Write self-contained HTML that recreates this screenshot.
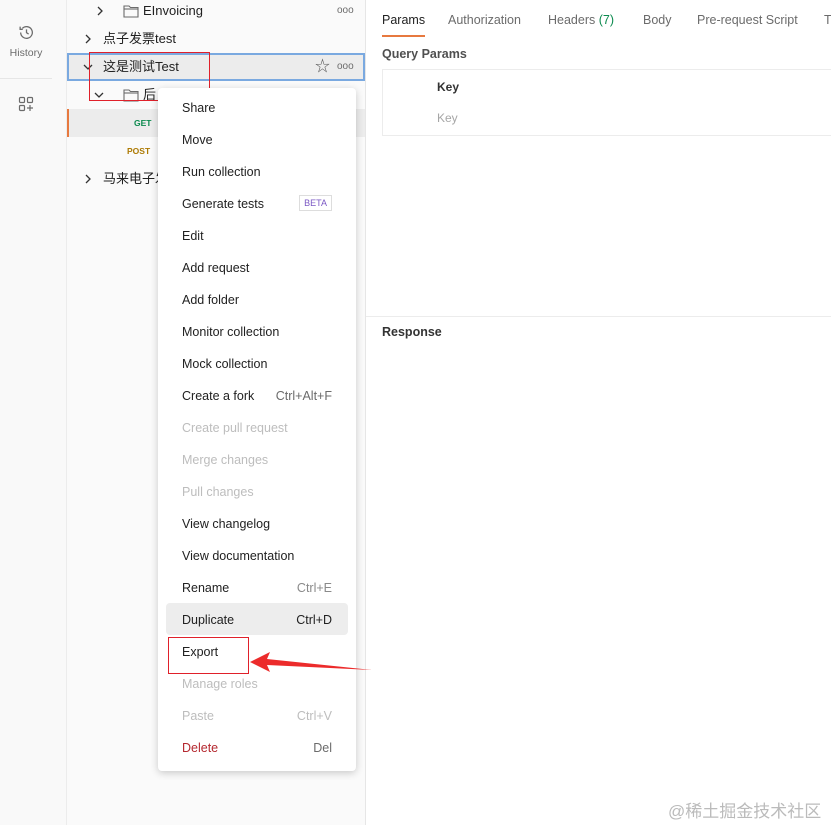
<!DOCTYPE html>
<html><head><meta charset="utf-8"><style>
*{margin:0;padding:0;box-sizing:border-box}
body{width:831px;height:825px;overflow:hidden;position:relative;background:#fff;font-family:"Liberation Sans","Noto Sans CJK SC",sans-serif;font-size:13px;color:#212121}
.abs{position:absolute}
#rail{left:0;top:0;width:67px;height:825px;background:#f9f9f9;border-right:1px solid #ececec}
#side{left:67px;top:0;width:299px;height:825px;background:#fafafa;border-right:1px solid #e6e6e6}
.row{position:absolute;left:0;width:298px;height:28px;line-height:28px}
.menu{left:158px;top:88px;width:198px;height:683px;background:#fff;border-radius:4px;box-shadow:0 2px 8px rgba(0,0,0,.2)}
.mi{position:absolute;left:24px;right:24px;height:32px;line-height:34px;font-size:12.5px;color:#212121}
.mi span{position:absolute;right:0;color:#6b6b6b}
.dis{color:#bdbdbd!important}
.dis span{color:#bdbdbd!important}
.tab{position:absolute;top:13px;font-size:12.5px;color:#6b6b6b}
.chev{position:absolute;top:9px}
</style></head><body>
<div id="rail" class="abs">
 <svg class="abs" style="left:18px;top:24px" width="17" height="17" viewBox="0 0 16 16" fill="none" stroke="#6b6b6b" stroke-width="1.2"><path d="M2.5 8a5.5 5.5 0 1 0 1.6-3.9"/><path d="M2 2.5v2.5h2.5"/><path d="M8 5v3.2l2 1.3"/></svg>
 <div class="abs" style="left:0;width:52px;top:47px;text-align:center;font-size:10.5px;color:#6b6b6b">History</div>
 <div class="abs" style="left:0;top:78px;width:52px;border-top:1px solid #e6e6e6"></div>
 <svg class="abs" style="left:18px;top:96px" width="16" height="16" viewBox="0 0 16 16" fill="none" stroke="#6b6b6b" stroke-width="1.2"><rect x="1.5" y="1.5" width="5" height="5" rx="1"/><rect x="9.5" y="1.5" width="5" height="5" rx="1"/><rect x="1.5" y="9.5" width="5" height="5" rx="1"/><path d="M12 9v6M9 12h6"/></svg>
</div>
<div id="side" class="abs">
 <div class="row" style="top:-3px"><svg class="chev" style="left:28px" width="10" height="10" viewBox="0 0 10 10" fill="none" stroke="#333" stroke-width="1.3"><path d="M3 1l4 4-4 4"/></svg>
  <svg class="abs" style="left:56px;top:7px" width="16" height="14" viewBox="0 0 16 14" fill="none" stroke="#6b6b6b" stroke-width="1.1"><path d="M1 2h5l1.5 1.5H15V13H1z"/><path d="M1 5h14"/></svg>
  <span class="abs" style="left:76px">EInvoicing</span><span class="abs" style="left:270px;color:#6b6b6b;font-size:10px">ooo</span></div>
 <div class="row" style="top:25px"><svg class="chev" style="left:16px" width="10" height="10" viewBox="0 0 10 10" fill="none" stroke="#333" stroke-width="1.3"><path d="M3 1l4 4-4 4"/></svg><span class="abs" style="left:36px">点子发票test</span></div>
 <div class="row" style="top:53px;background:#ececec;border:2px solid #7aa9e0;height:28px;line-height:24px"><svg class="chev" style="left:14px;top:7px" width="10" height="10" viewBox="0 0 10 10" fill="none" stroke="#333" stroke-width="1.3"><path d="M1 3l4 4 4-4"/></svg><span class="abs" style="left:34px">这是测试Test</span><span class="abs" style="left:246px;font-size:15px;color:#555">☆</span><span class="abs" style="left:268px;color:#6b6b6b;font-size:10px">ooo</span></div>
 <div class="row" style="top:81px"><svg class="chev" style="left:27px" width="10" height="10" viewBox="0 0 10 10" fill="none" stroke="#333" stroke-width="1.3"><path d="M1 3l4 4 4-4"/></svg>
  <svg class="abs" style="left:56px;top:7px" width="16" height="14" viewBox="0 0 16 14" fill="none" stroke="#6b6b6b" stroke-width="1.1"><path d="M1 2h5l1.5 1.5H15V13H1z"/><path d="M1 5h14"/></svg><span class="abs" style="left:76px">后</span></div>
 <div class="row" style="top:109px;background:#ececec;border-left:2px solid #e7793f"><span class="abs" style="left:65px;font-size:8.5px;font-weight:bold;color:#0b8a4e">GET</span></div>
 <div class="row" style="top:137px"><span class="abs" style="left:60px;font-size:8.5px;font-weight:bold;color:#ad7a03">POST</span></div>
 <div class="row" style="top:165px"><svg class="chev" style="left:16px" width="10" height="10" viewBox="0 0 10 10" fill="none" stroke="#333" stroke-width="1.3"><path d="M3 1l4 4-4 4"/></svg><span class="abs" style="left:36px">马来电子发</span></div>
</div>
<div class="abs" style="left:89px;top:52px;width:121px;height:49px;border:1px solid #e0202a"></div>
<div class="tab" style="left:382px;color:#212121">Params</div>
<div class="abs" style="left:382px;top:35px;width:43px;height:2px;background:#e7793f"></div>
<div class="tab" style="left:448px">Authorization</div>
<div class="tab" style="left:548px">Headers <span style="color:#0b8a4e">(7)</span></div>
<div class="tab" style="left:643px">Body</div>
<div class="tab" style="left:697px">Pre-request Script</div>
<div class="tab" style="left:824px">T</div>
<div class="abs" style="left:382px;top:47px;font-size:12.5px;font-weight:bold;color:#505050">Query Params</div>
<div class="abs" style="left:382px;top:69px;width:460px;height:67px;border:1px solid #ececec"></div>
<div class="abs" style="left:437px;top:80px;font-size:12px;font-weight:bold;color:#333">Key</div>
<div class="abs" style="left:437px;top:111px;font-size:12px;color:#a6a6a6">Key</div>
<div class="abs" style="left:366px;top:316px;width:465px;border-top:1px solid #ececec"></div>
<div class="abs" style="left:382px;top:325px;font-size:12.5px;font-weight:bold;color:#333">Response</div>
<div class="abs menu">
 <div class="mi" style="top:3px">Share</div>
 <div class="mi" style="top:35px">Move</div>
 <div class="mi" style="top:67px">Run collection</div>
 <div class="mi" style="top:99px">Generate tests<span style="top:8px;height:16px;line-height:14px;border:1px solid #ddd;padding:0 4px;font-size:9px;color:#7b58c4">BETA</span></div>
 <div class="mi" style="top:131px">Edit</div>
 <div class="mi" style="top:163px">Add request</div>
 <div class="mi" style="top:195px">Add folder</div>
 <div class="mi" style="top:227px">Monitor collection</div>
 <div class="mi" style="top:259px">Mock collection</div>
 <div class="mi" style="top:291px">Create a fork<span>Ctrl+Alt+F</span></div>
 <div class="mi dis" style="top:323px">Create pull request</div>
 <div class="mi dis" style="top:355px">Merge changes</div>
 <div class="mi dis" style="top:387px">Pull changes</div>
 <div class="mi" style="top:419px">View changelog</div>
 <div class="mi" style="top:451px">View documentation</div>
 <div class="mi" style="top:483px">Rename<span style="color:#8a8a8a">Ctrl+E</span></div>
 <div class="abs" style="left:8px;top:515px;width:182px;height:32px;background:#ededed;border-radius:4px"></div>
 <div class="mi" style="top:515px">Duplicate<span style="color:#212121">Ctrl+D</span></div>
 <div class="mi" style="top:547px">Export</div>
 <div class="mi dis" style="top:579px">Manage roles</div>
 <div class="mi dis" style="top:611px">Paste<span>Ctrl+V</span></div>
 <div class="mi" style="top:643px;color:#b5282f">Delete<span>Del</span></div>
</div>
<div class="abs" style="left:168px;top:637px;width:81px;height:37px;border:1px solid #e0202a"></div>
<svg class="abs" style="left:248px;top:648px" width="126" height="26" viewBox="0 0 126 26"><path d="M2 14 L22 4 L19 11 L124 22 L19 17 L22 24 Z" fill="#ec2b2b"/></svg>
<div class="abs" style="left:668px;top:797px;font-size:17px;color:#bbb">@稀土掘金技术社区</div>
</body></html>
